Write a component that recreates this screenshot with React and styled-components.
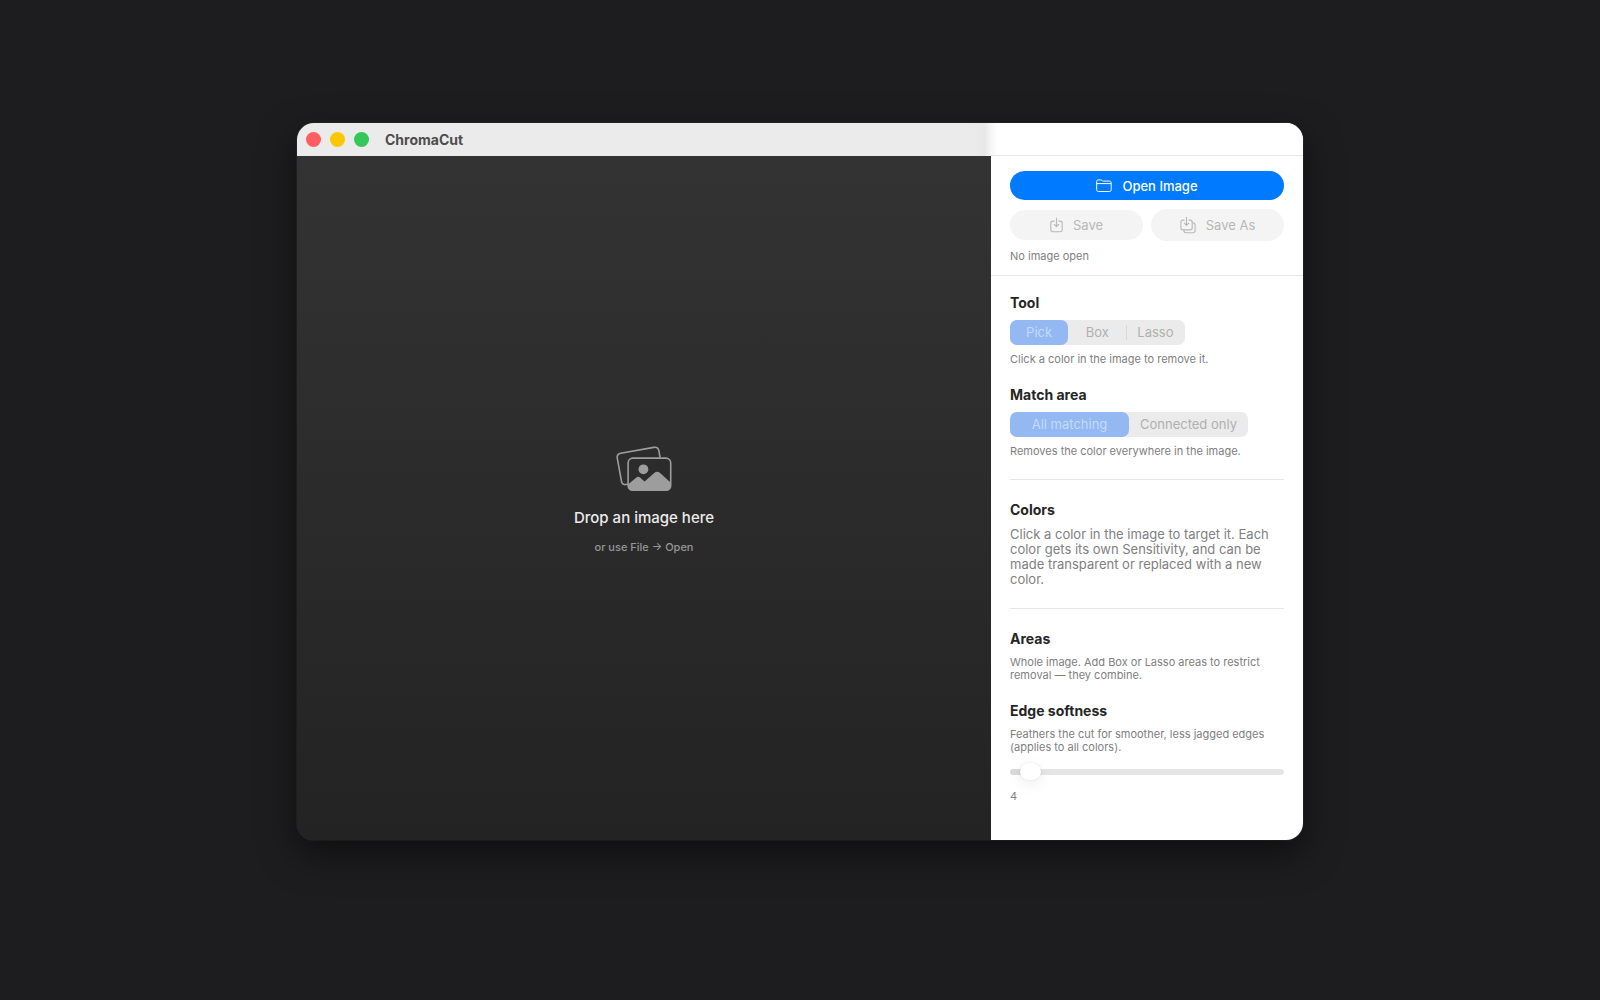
import { useState } from "react";
import styled, { createGlobalStyle } from "styled-components";

const FolderIcon = () => (
  <svg width="16" height="14" viewBox="0 0 16 14" fill="none" stroke="currentColor" strokeWidth="1" aria-hidden="true">
    <path d="M0.7 3V2.6C0.7 1.5 1.3 0.9 2.4 0.9H4.4C5 0.9 5.4 1 5.8 1.3L6.3 1.7C6.7 2 7 2.1 7.5 2.1H13.5C14.6 2.1 15.2 2.8 15.2 3.9V10.8C15.2 11.9 14.6 12.5 13.5 12.5H2.5C1.4 12.5 0.7 11.9 0.7 10.8Z" />
    <path d="M0.9 4.6H15" />
  </svg>
);

const SaveIcon = () => (
  <svg width="13" height="16" viewBox="0 0 13 16" fill="none" stroke="currentColor" strokeWidth="1.1" strokeLinecap="round" strokeLinejoin="round" aria-hidden="true">
    <path d="M4.2 4.1H2.9C1.5 4.1 0.8 4.9 0.8 6.3V12.5C0.8 13.9 1.5 14.7 2.9 14.7H10.1C11.5 14.7 12.2 13.9 12.2 12.5V6.3C12.2 4.9 11.5 4.1 10.1 4.1H8.8" />
    <path d="M6.5 1.1V9.5M4.3 7.5L6.5 9.7L8.7 7.5" />
  </svg>
);

const SaveAsIcon = () => (
  <svg width="16" height="18" viewBox="0 0 16 18" fill="none" stroke="currentColor" strokeWidth="1.1" strokeLinecap="round" strokeLinejoin="round" aria-hidden="true">
    <path d="M4.2 4.1H3.1C1.7 4.1 0.9 4.9 0.9 6.3V11.7C0.9 13.1 1.7 13.9 3.1 13.9H10C11.4 13.9 12.2 13.1 12.2 11.7V6.3C12.2 4.9 11.4 4.1 10 4.1H8.9" />
    <path d="M6.5 1.2V9.2M4.3 7.2L6.5 9.4L8.7 7.2" />
    <path d="M12.4 6.7H13C14.4 6.7 15.1 7.5 15.1 8.9V14.5C15.1 15.9 14.4 16.7 13 16.7H6.1C4.7 16.7 3.9 15.9 3.9 14.5V14.1" />
  </svg>
);

const PhotosIcon = () => (
  <svg width="56" height="46" viewBox="0 0 56 46" fill="none" aria-hidden="true">
    <path
      d="M12 38.2L9.6 38.5C7.2 38.9 5.9 37.7 5.5 35.3L1.3 12.3C0.8 9.4 1.9 7.7 4.8 7.2L37.8 1.4C40.7 0.9 42.4 2 42.9 4.9L44 11.4"
      stroke="#9d9d9d"
      strokeWidth="1.6"
    />
    <rect x="12.1" y="12.1" width="42.6" height="32.2" rx="4.8" stroke="#9d9d9d" strokeWidth="1.6" />
    <circle cx="27.4" cy="23.3" r="4.9" fill="#9d9d9d" />
    <path
      d="M12.2 38.2L20.1 31.7C21.6 30.5 22.9 30.5 24.3 31.7L28.6 35.4L38.8 26.6C40.4 25.3 41.9 25.3 43.5 26.6L54.6 36.6V40C54.6 43 53 44.6 50 44.6H16.8C13.8 44.6 12.2 43 12.2 40Z"
      fill="#9d9d9d"
    />
  </svg>
);

const Segmented = ({ name, label, options, value }) => (
  <SegmentGroup role="radiogroup" aria-label={label}>
    {options.map((option) => (
      <Segment key={option}>
        <input type="radio" name={name} value={option} defaultChecked={option === value} disabled />
        <span>{option}</span>
      </Segment>
    ))}
  </SegmentGroup>
);

const App = () => {
  const [softness, setSoftness] = useState(4);

  return (
    <>
      <GlobalStyle />
      <Desktop>
        <Window>
          <CanvasPane>
            <TitleBar>
              <WindowButton type="button" aria-label="Close" $color="#ff5d5f" />
              <WindowButton type="button" aria-label="Minimize" $color="#fac800" />
              <WindowButton type="button" aria-label="Zoom" $color="#34c759" />
              <WindowTitle>ChromaCut</WindowTitle>
            </TitleBar>
            <DropZone>
              <PhotosIcon />
              <DropTitle>Drop an image here</DropTitle>
              <DropHint>or use File → Open</DropHint>
            </DropZone>
          </CanvasPane>

          <Sidebar>
            <SidebarTop />
            <FileActions>
              <PrimaryButton type="button">
                <FolderIcon />
                Open Image
              </PrimaryButton>
              <ButtonRow>
                <SecondaryButton type="button" disabled $height="30px">
                  <SaveIcon />
                  Save
                </SecondaryButton>
                <SecondaryButton type="button" disabled $height="32px">
                  <SaveAsIcon />
                  Save As
                </SecondaryButton>
              </ButtonRow>
              <Caption>No image open</Caption>
            </FileActions>

            <Options>
              <Section>
                <Heading>Tool</Heading>
                <Segmented name="tool" label="Tool" options={["Pick", "Box", "Lasso"]} value="Pick" />
                <Caption>Click a color in the image to remove it.</Caption>
              </Section>
              <Section>
                <Heading>Match area</Heading>
                <Segmented
                  name="match"
                  label="Match area"
                  options={["All matching", "Connected only"]}
                  value="All matching"
                />
                <Caption>Removes the color everywhere in the image.</Caption>
              </Section>
              <Divider />
              <Section>
                <Heading>Colors</Heading>
                <Body>
                  Click a color in the image to target it. Each color gets its own Sensitivity, and can be made
                  transparent or replaced with a new color.
                </Body>
              </Section>
              <Divider />
              <Section>
                <Heading>Areas</Heading>
                <Caption>Whole image. Add Box or Lasso areas to restrict removal — they combine.</Caption>
              </Section>
              <Section>
                <Heading as="label" htmlFor="softness">
                  Edge softness
                </Heading>
                <Caption>Feathers the cut for smoother, less jagged edges (applies to all colors).</Caption>
                <Slider
                  id="softness"
                  type="range"
                  min="0"
                  max="100"
                  value={softness}
                  onChange={(e) => setSoftness(Number(e.target.value))}
                />
                <Caption>{softness}</Caption>
              </Section>
            </Options>
          </Sidebar>
        </Window>
      </Desktop>
    </>
  );
};

const GlobalStyle = createGlobalStyle`
  * {
    box-sizing: border-box;
  }

  body {
    margin: 0;
    background: #1d1d1f;
    font-family: Inter, "Liberation Sans", sans-serif;
    -webkit-font-smoothing: antialiased;
  }

  button,
  input {
    font: inherit;
  }
`;

const Desktop = styled.main`
  min-height: 100vh;
  display: flex;
  align-items: center;
  justify-content: center;
  padding: 24px 24px 61px;
`;

const Window = styled.div`
  flex: 1;
  max-width: 1006px;
  display: grid;
  grid-template-columns: minmax(0, 1fr) 312px;
  border-radius: 17px;
  overflow: hidden;
  box-shadow: 0 0 1px rgba(255, 255, 255, 0.4), 0 14px 36px rgba(0, 0, 0, 0.5);
`;

const CanvasPane = styled.section`
  display: flex;
  flex-direction: column;
`;

const TitleBar = styled.header`
  height: 33px;
  display: flex;
  align-items: center;
  gap: 9px;
  padding: 0 9px;
  background: linear-gradient(to left, #f6f6f6, #e8e8e8 6px, #ebebeb 18px);
`;

const WindowButton = styled.button`
  width: 15px;
  height: 15px;
  padding: 0;
  border: none;
  border-radius: 50%;
  background: ${(props) => props.$color};
`;

const WindowTitle = styled.h1`
  margin: 0 0 0 7px;
  font-size: 14px;
  line-height: 18px;
  font-weight: 700;
  color: #4d4d4d;
`;

const DropZone = styled.div`
  flex: 1;
  display: flex;
  flex-direction: column;
  align-items: center;
  justify-content: center;
  padding-top: 4px;
  background: linear-gradient(#333333, #232323);
`;

const DropTitle = styled.h2`
  margin: 16px 0 12px;
  font-size: 15px;
  line-height: 20px;
  font-weight: 500;
  color: #ebebeb;
`;

const DropHint = styled.p`
  margin: 0;
  font-size: 11px;
  line-height: 14px;
  font-weight: 500;
  color: #969696;
`;

const Sidebar = styled.aside`
  display: flex;
  flex-direction: column;
  background: #ffffff;
`;

const SidebarTop = styled.div`
  height: 33px;
  border-bottom: 1px solid #e6e6e6;
  background: linear-gradient(to right, #f6f6f6, #ffffff 6px);
`;

const FileActions = styled.div`
  display: flex;
  flex-direction: column;
  gap: 9px;
  padding: 15px 19px 12px;
  border-bottom: 1px solid #e6e6e6;
`;

const PrimaryButton = styled.button`
  height: 29px;
  display: flex;
  align-items: center;
  justify-content: center;
  gap: 10px;
  padding: 0;
  border: none;
  border-radius: 15px;
  background: #007aff;
  color: #ffffff;
  font-size: 13px;
  font-weight: 500;
`;

const ButtonRow = styled.div`
  display: grid;
  grid-template-columns: 1fr 1fr;
  align-items: center;
  gap: 8px;
`;

const SecondaryButton = styled.button`
  height: ${(props) => props.$height};
  display: flex;
  align-items: center;
  justify-content: center;
  gap: 10px;
  padding: 0;
  border: none;
  border-radius: 16px;
  background: #f4f4f4;
  color: #b8b8b8;
  font-size: 13px;
`;

const Options = styled.div`
  display: flex;
  flex-direction: column;
  gap: 20px;
  padding: 18px 19px 37px;
`;

const Section = styled.section`
  display: flex;
  flex-direction: column;
  align-items: flex-start;
  gap: 8px;
`;

const Heading = styled.h2`
  margin: 0;
  font-size: 14px;
  line-height: 18px;
  font-weight: 700;
  color: #262626;
`;

const Caption = styled.p`
  margin: 0;
  font-size: 11px;
  line-height: 13px;
  color: #808080;
`;

const Body = styled.p`
  margin: 0;
  font-size: 13px;
  line-height: 15px;
  color: #808080;
`;

const Divider = styled.hr`
  width: 100%;
  height: 1px;
  margin: 1px 0;
  border: none;
  background: #e6e6e6;
`;

const SegmentGroup = styled.div`
  display: inline-grid;
  grid-auto-flow: column;
  grid-auto-columns: 1fr;
  border-radius: 7px;
  background: #ebebeb;
`;

const Segment = styled.label`
  position: relative;

  input {
    position: absolute;
    inset: 0;
    margin: 0;
    opacity: 0;
  }

  span {
    display: block;
    padding: 0 11px;
    border-radius: 7px;
    font-size: 13px;
    line-height: 25px;
    text-align: center;
    color: #b0b0b0;
  }

  input:checked + span {
    background: #93b8f2;
    color: #c4dafb;
  }

  /* hairline between two unselected segments */
  &:not(:has(:checked)) + &::before {
    content: "";
    position: absolute;
    left: 0;
    top: 5px;
    bottom: 5px;
    width: 1px;
    background: #d9d9d9;
  }
`;

const Slider = styled.input`
  appearance: none;
  width: 100%;
  height: 20px;
  margin: 0;
  background: transparent;

  &::-webkit-slider-runnable-track {
    height: 6px;
    border-radius: 3px;
    background: linear-gradient(to right, #d9d9d9 20px, #e5e5e5 20px);
  }

  &::-webkit-slider-thumb {
    appearance: none;
    width: 21px;
    height: 17px;
    margin-top: -6px;
    border-radius: 9px;
    background: #ffffff;
    box-shadow: 0 0 2px rgba(0, 0, 0, 0.12), 0 4px 14px rgba(0, 0, 0, 0.08);
  }
`;

export default App;
